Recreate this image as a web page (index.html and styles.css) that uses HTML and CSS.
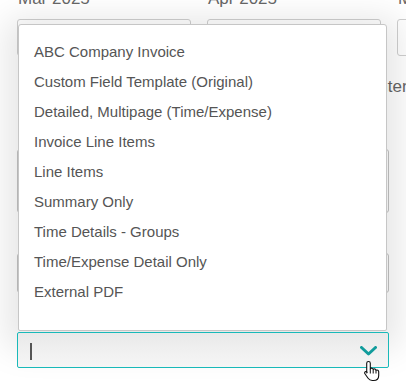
FILE: index.html
```html
<!DOCTYPE html>
<html>
<head>
<meta charset="utf-8">
<link rel="stylesheet" href="styles.css">
</head>
<body>
<div class="page">
  <div class="months">
    <div class="month">
      <div class="label">Mar 2025</div>
      <div class="box"></div>
    </div>
    <div class="month">
      <div class="label">Apr 2025</div>
      <div class="box"></div>
    </div>
    <div class="month">
      <div class="label">May 2025</div>
      <div class="box"></div>
    </div>
  </div>
  <div class="hint">Enter</div>
  <div class="bg-field tall"></div>
  <div class="bg-field short"></div>

  <div class="select">
    <ul class="menu">
      <li>ABC Company Invoice</li>
      <li>Custom Field Template (Original)</li>
      <li>Detailed, Multipage (Time/Expense)</li>
      <li>Invoice Line Items</li>
      <li>Line Items</li>
      <li>Summary Only</li>
      <li>Time Details - Groups</li>
      <li>Time/Expense Detail Only</li>
      <li>External PDF</li>
    </ul>
    <div class="control">
      <span class="caret"></span>
      <svg class="chevron" width="17" height="10" viewBox="0 0 17 10"><path d="M1.5 1.5 L8.5 8 L15.5 1.5" fill="none" stroke="#119c9c" stroke-width="3" stroke-linecap="round" stroke-linejoin="round"/></svg>
    </div>
    <svg class="pointer" width="18" height="22" viewBox="0 0 18 22"><path d="M5.5 1.5 C6.6 1.5 7.3 2.2 7.3 3.3 L7.3 9 C7.6 8.3 8.4 8 9.1 8.2 C9.8 8.4 10.2 9 10.2 9.6 C10.5 9 11.3 8.8 12 9 C12.7 9.3 13 9.9 13 10.5 C13.4 10 14.2 9.9 14.8 10.2 C15.4 10.5 15.7 11.1 15.7 11.8 L15.7 15.5 C15.7 18.6 13.6 20.5 10.6 20.5 L9.2 20.5 C7.4 20.5 6.1 19.7 5.1 18.3 L1.9 13.7 C1.4 13 1.6 12.1 2.3 11.7 C3 11.3 3.8 11.5 4.2 12.1 L3.7 12.9 L3.7 3.3 C3.7 2.2 4.4 1.5 5.5 1.5 Z" fill="#fff" stroke="#111" stroke-width="1.1" stroke-linejoin="round"/><path d="M7.3 9 L7.3 13.5 M10.2 9.6 L10.2 13.5 M13 10.5 L13 13.5" stroke="#111" stroke-width="1" fill="none"/></svg>
  </div>
</div>
</body>
</html>
```

FILE: styles.css
```css
html, body {
  margin: 0;
  padding: 0;
  background: #ffffff;
  overflow: hidden;
}

.page {
  position: relative;
  width: 406px;
  height: 391px;
  font-family: "Liberation Sans", Arial, sans-serif;
  overflow: hidden;
}

.months {
  display: grid;
  grid-template-columns: 174px 174px 174px;
  column-gap: 16px;
  margin-left: 17px;
  margin-top: -11px;
}

.label {
  font-size: 17px;
  line-height: 20px;
  color: #666;
  padding-left: 1px;
  height: 20px;
  margin-bottom: 10px;
}

.box {
  height: 35px;
  border: 1px solid #cfcfcf;
  border-radius: 3px;
  background: #fff;
}

.hint {
  margin-left: 367px;
  margin-top: 21px;
  font-size: 17px;
  line-height: 20px;
  color: #666;
  white-space: nowrap;
}

.bg-field {
  margin-left: 17px;
  width: 370px;
  border: 1px solid #c4c4c4;
  border-radius: 3px;
}

.bg-field.tall {
  margin-top: 52px;
  height: 62px;
}

.bg-field.short {
  margin-top: 40px;
  height: 38px;
}

.select {
  position: absolute;
  left: 17px;
  top: 24px;
  width: 372px;
}

.menu {
  list-style: none;
  margin: 0 2px 0 1px;
  padding: 12px 0 23px;
  background: #fff;
  border: 1px solid #c6c6c6;
  border-radius: 3px 3px 2px 2px;
  box-shadow: 0 6px 34px 12px rgba(0, 0, 0, 0.1);
}

.menu li {
  height: 30px;
  line-height: 30px;
  padding-left: 15px;
  font-size: 15px;
  color: #555;
  white-space: nowrap;
}

.control {
  position: relative;
  height: 34px;
  margin-top: 1px;
  border: 1px solid #19b9b9;
  border-radius: 2px;
  background: linear-gradient(#e9e9e9, #f1f1f1 60%, #f5f5f5);
  display: flex;
  align-items: center;
  justify-content: space-between;
  padding: 0 11px 0 12px;
}

.caret {
  width: 2px;
  height: 17px;
  background: #555;
  margin-top: 2px;
}

.chevron {
  display: block;
  margin-top: 2px;
}

.pointer {
  position: absolute;
  left: 346px;
  top: 336px;
}
```
